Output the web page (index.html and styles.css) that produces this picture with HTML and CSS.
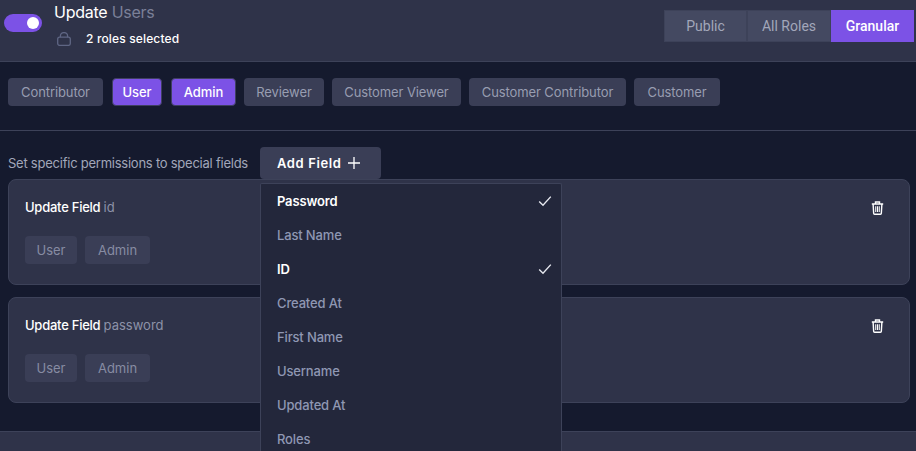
FILE: index.html
```html
<!DOCTYPE html>
<html>
<head>
<meta charset="utf-8">
<title>Update Users</title>
<link rel="stylesheet" href="styles.css">
</head>
<body>
<div class="header">
  <div class="toggle"><span class="knob"></span></div>
  <div class="head-text">
    <div class="title">Update <span class="muted">Users</span></div>
    <div class="selected">
      <svg class="lock" width="14" height="14" viewBox="0 0 14 14" fill="none" stroke="#5f6684" stroke-width="1.3"><rect x="0.7" y="5.2" width="12.6" height="8.2" rx="2"/><path d="M3.4 5.2V3.9a3.6 3.3 0 0 1 7.2 0v1.3"/></svg>
      <span>2 roles selected</span>
    </div>
  </div>
  <div class="seg">
    <div class="seg-btn seg-public">Public</div>
    <div class="seg-btn seg-all">All Roles</div>
    <div class="seg-btn seg-on">Granular</div>
  </div>
</div>

<div class="roles">
  <div class="chip w-contributor">Contributor</div>
  <div class="chip on w-user">User</div>
  <div class="chip on w-admin">Admin</div>
  <div class="chip w-reviewer">Reviewer</div>
  <div class="chip w-viewer">Customer Viewer</div>
  <div class="chip w-cust-contrib">Customer Contributor</div>
  <div class="chip w-customer">Customer</div>
</div>

<div class="fields">
  <div class="fields-top">
    <span class="fields-label">Set specific permissions to special fields</span>
    <div class="add-wrap">
      <div class="add-btn">Add Field
        <svg width="14" height="14" viewBox="0 0 14 14" stroke="#fff" stroke-width="1.3"><path d="M7 1v12M1 7h12"/></svg>
      </div>
      <div class="menu">
        <div class="menu-item picked">Password
          <svg width="14" height="12" viewBox="0 0 14 12" fill="none" stroke="#e6e8ef" stroke-width="1.4"><path d="M1.2 6.4l3.8 3.8 7.8-8.6"/></svg>
        </div>
        <div class="menu-item">Last Name</div>
        <div class="menu-item picked">ID
          <svg width="14" height="12" viewBox="0 0 14 12" fill="none" stroke="#e6e8ef" stroke-width="1.4"><path d="M1.2 6.4l3.8 3.8 7.8-8.6"/></svg>
        </div>
        <div class="menu-item">Created At</div>
        <div class="menu-item">First Name</div>
        <div class="menu-item">Username</div>
        <div class="menu-item">Updated At</div>
        <div class="menu-item">Roles</div>
      </div>
    </div>
  </div>

  <div class="card">
    <div class="card-main">
      <div class="card-title">Update Field <span class="muted">id</span></div>
      <div class="tags"><div class="tag w-tag-user">User</div><div class="tag w-tag-admin">Admin</div></div>
    </div>
    <svg class="trash" width="13" height="14" viewBox="0 0 14 16" fill="none" stroke="#fff" stroke-width="1.6"><path d="M0.5 3.5h13M4.7 3V1.2h4.6V3M2 3.8l.6 10.2c0 .7.4 1.2 1.1 1.2h6.6c.7 0 1.1-.5 1.1-1.2L12 3.8"/><path d="M5 6v6.5M7 6v6.5M9 6v6.5" stroke-width="1.2"/></svg>
  </div>

  <div class="card">
    <div class="card-main">
      <div class="card-title">Update Field <span class="muted">password</span></div>
      <div class="tags"><div class="tag w-tag-user">User</div><div class="tag w-tag-admin">Admin</div></div>
    </div>
    <svg class="trash" width="13" height="14" viewBox="0 0 14 16" fill="none" stroke="#fff" stroke-width="1.6"><path d="M0.5 3.5h13M4.7 3V1.2h4.6V3M2 3.8l.6 10.2c0 .7.4 1.2 1.1 1.2h6.6c.7 0 1.1-.5 1.1-1.2L12 3.8"/><path d="M5 6v6.5M7 6v6.5M9 6v6.5" stroke-width="1.2"/></svg>
  </div>
</div>

<div class="next-row"></div>
</body>
</html>
```

FILE: styles.css
```css
html, body {
  margin: 0;
  height: 451px;
  overflow: hidden;
}

body {
  background-color: #151a2e;
  font-family: "Inter", "Liberation Sans", sans-serif;
  color: #fff;
}

.muted {
  color: #7b8098;
}

.header {
  height: 61px;
  background-color: #2f3349;
  border-bottom: 1px solid #3d4259;
  display: flex;
  align-items: flex-start;
  padding-left: 4px;
  padding-right: 2px;
}

.toggle {
  width: 38px;
  height: 18px;
  margin-top: 14px;
  border-radius: 9px;
  background-color: #7c52e6;
  position: relative;
}

.knob {
  position: absolute;
  right: 3px;
  top: 3px;
  width: 12px;
  height: 12px;
  border-radius: 50%;
  background-color: #fff;
}

.head-text {
  margin-left: 12px;
  flex: 1;
}

.title {
  font-size: 16px;
  line-height: 20px;
  margin-top: 2px;
  letter-spacing: -.25px;
}

.selected {
  display: flex;
  align-items: center;
  font-size: 12px;
  font-weight: 500;
  letter-spacing: .15px;
  margin-top: 8px;
}

.lock {
  margin-left: 3px;
  margin-right: 15px;
  margin-top: 2px;
}

.seg {
  display: flex;
  margin-top: 10px;
  height: 32px;
  font-family: "Roboto", sans-serif;
  font-size: 14px;
}

.seg-btn {
  display: flex;
  align-items: center;
  justify-content: center;
  background-color: #444961;
  border: 1px solid #3d4259;
  color: #a2a7ba;
  box-sizing: border-box;
}

.seg-public { width: 83px; }
.seg-all { width: 84px; }

.seg-on {
  width: 83px;
  background-color: #7c52e6;
  border-color: #7c52e6;
  color: #fff;
  font-weight: 500;
}

.roles {
  display: flex;
  gap: 8px;
  padding: 16px 8px 24px;
  border-bottom: 1px solid #3d4259;
}

.chip {
  box-sizing: border-box;
  height: 28px;
  line-height: 28px;
  text-align: center;
  border-radius: 4px;
  background-color: #3a3e56;
  color: #989db1;
  font-size: 13px;
  letter-spacing: -.1px;
  white-space: nowrap;
}

.chip.on {
  background-color: #7c52e6;
  color: #fff;
  font-weight: 500;
  border: 1px solid #3f4060;
  line-height: 26px;
}

.w-contributor { width: 95px; margin-right: 1px; }
.w-user { width: 50px; margin-right: 1px; }
.w-admin { width: 65px; }
.w-reviewer { width: 80px; }
.w-viewer { width: 129px; }
.w-cust-contrib { width: 157px; }
.w-customer { width: 86px; }

.fields {
  padding: 16px 6px 28px 8px;
  border-bottom: 1px solid #3d4259;
}

.fields-top {
  display: flex;
  align-items: center;
  height: 32px;
}

.fields-label {
  font-size: 13px;
  letter-spacing: -.24px;
  color: #a2a7ba;
  width: 252px;
  white-space: nowrap;
}

.add-wrap {
  position: relative;
}

.add-btn {
  display: flex;
  align-items: center;
  gap: 6px;
  box-sizing: border-box;
  width: 121px;
  height: 32px;
  padding-left: 17px;
  border-radius: 4px;
  background-color: #3a3e56;
  font-size: 13px;
  font-weight: 600;
  letter-spacing: .6px;
}

.menu {
  position: absolute;
  left: 0;
  top: 36px;
  z-index: 5;
  width: 302px;
  height: 268px;
  overflow: hidden;
  box-sizing: border-box;
  background-color: #23273b;
  border: 1px solid #3d4259;
  border-bottom: 0;
  border-radius: 2px 2px 0 0;
}

.menu-item {
  display: flex;
  align-items: center;
  justify-content: space-between;
  height: 34px;
  padding: 0 9px 0 16px;
  font-size: 13px;
  font-weight: 500;
  letter-spacing: -.15px;
  color: #8f97b3;
}

.menu-item.picked {
  color: #fff;
  font-weight: 600;
}

.card {
  display: flex;
  justify-content: space-between;
  box-sizing: border-box;
  height: 106px;
  margin-bottom: 12px;
  padding: 16px 25px 0 16px;
  background-color: #2f3349;
  border: 1px solid #3d4259;
  border-radius: 8px;
}

.card:last-child {
  margin-bottom: 0;
}

.card-title {
  font-size: 13px;
  line-height: 22px;
  font-weight: 500;
  letter-spacing: -.25px;
}

.card-title .muted {
  font-weight: 400;
  letter-spacing: 0;
  color: #8d92a8;
}

.tags {
  display: flex;
  gap: 8px;
  margin-top: 18px;
}

.tag {
  height: 28px;
  line-height: 28px;
  text-align: center;
  border-radius: 4px;
  background-color: #3a3e56;
  color: #878ca3;
  font-size: 13px;
}

.w-tag-user { width: 52px; }
.w-tag-admin { width: 65px; }

.trash {
  margin-top: 5px;
}

.next-row {
  height: 19px;
  background-color: #2f3349;
}
```
